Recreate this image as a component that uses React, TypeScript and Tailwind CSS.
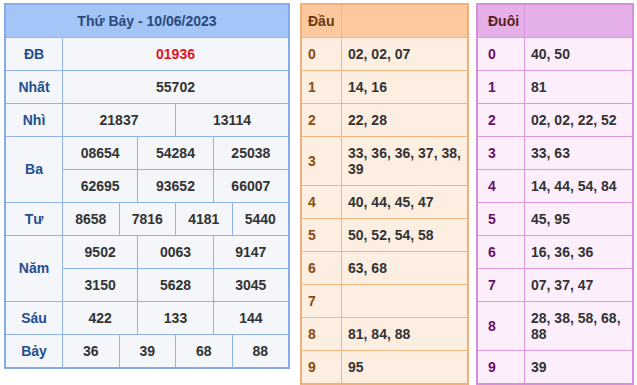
import React from 'react';

type Cell = { label: string; values: string[][] };

const prizes: Cell[] = [
  { label: 'ĐB', values: [['01936']] },
  { label: 'Nhất', values: [['55702']] },
  { label: 'Nhì', values: [['21837', '13114']] },
  { label: 'Ba', values: [['08654', '54284', '25038'], ['62695', '93652', '66007']] },
  { label: 'Tư', values: [['8658', '7816', '4181', '5440']] },
  { label: 'Năm', values: [['9502', '0063', '9147'], ['3150', '5628', '3045']] },
  { label: 'Sáu', values: [['422', '133', '144']] },
  { label: 'Bảy', values: [['36', '39', '68', '88']] },
];

const dau = ['02, 02, 07', '14, 16', '22, 28', '33, 36, 36, 37, 38, 39', '40, 44, 45, 47', '50, 52, 54, 58', '63, 68', '', '81, 84, 88', '95'];
const duoi = ['40, 50', '81', '02, 02, 22, 52', '33, 63', '14, 44, 54, 84', '45, 95', '16, 36, 36', '07, 37, 47', '28, 38, 58, 68, 88', '39'];

const ResultTable = () => (
  <div className="w-[286px] border-2 border-[#86ace8] bg-[#8fb3ea] flex flex-col gap-px">
    <div className="h-[32px] bg-[#a3c5f8] flex items-center justify-center text-[#2b4a78]">
      Thứ Bảy - 10/06/2023
    </div>
    {prizes.map((p, i) => (
      <div key={i} className="flex gap-px">
        <div className="w-[56px] shrink-0 bg-[#f4f6fa] flex items-center justify-center text-[#1f4f8f]">
          {p.label}
        </div>
        <div className="flex-1 flex flex-col gap-px">
          {p.values.map((row, r) => (
            <div key={r} className="h-[32px] flex gap-px">
              {row.map((v, k) => (
                <div
                  key={k}
                  className={`flex-1 bg-[#f4f6fa] flex items-center justify-center ${i === 0 ? 'text-[#e3141b]' : 'text-[#333333]'}`}
                >
                  {v}
                </div>
              ))}
            </div>
          ))}
        </div>
      </div>
    ))}
  </div>
);

interface LotoProps {
  title: string;
  rows: string[];
  width: string;
  labelW: string;
  tall: number;
  border: string;
  line: string;
  head: string;
  cell: string;
  labelColor: string;
  headColor: string;
  labelPad: string;
}

const LotoTable: React.FC<LotoProps> = ({ title, rows, width, labelW, tall, border, line, head, cell, labelColor, headColor, labelPad }) => (
  <div className={`${width} border-2 ${border} ${line} flex flex-col gap-px`}>
    <div className="h-[32px] flex gap-px">
      <div className={`${labelW} shrink-0 ${head} ${headColor} ${labelPad} flex items-center`}>{title}</div>
      <div className={`flex-1 ${head}`} />
    </div>
    {rows.map((v, i) => (
      <div key={i} className={`${i === tall ? 'h-[48px]' : 'h-[32px]'} flex gap-px`}>
        <div className={`${labelW} shrink-0 ${cell} ${labelColor} ${labelPad} flex items-center`}>{i}</div>
        <div className={`flex-1 ${cell} text-[#333333] pl-[6px] pr-[2px] flex items-center leading-[16px]`}>{v}</div>
      </div>
    ))}
  </div>
);

export default function App() {
  return (
    <div
      className="w-[637px] h-[385px] bg-white flex items-start pt-[3px] pl-[4px] text-[14px] font-bold"
      style={{ fontFamily: '"Liberation Sans", Arial, sans-serif' }}
    >
      <ResultTable />
      <div className="ml-[10px]">
        <LotoTable
          title="Đầu"
          rows={dau}
          width="w-[169px]"
          labelW="w-[39px]"
          tall={3}
          border="border-[#f0b07a]"
          line="bg-[#f2b680]"
          head="bg-[#fbc99d]"
          cell="bg-[#fdeee2]"
          labelColor="text-[#8a4b0e]"
          headColor="text-[#6b3a12]"
          labelPad="pl-[6px]"
        />
      </div>
      <div className="ml-[7px]">
        <LotoTable
          title="Đuôi"
          rows={duoi}
          width="w-[158px]"
          labelW="w-[46px]"
          tall={8}
          border="border-[#d68fd8]"
          line="bg-[#dc98dc]"
          head="bg-[#e5b0e7]"
          cell="bg-[#fdeefc]"
          labelColor="text-[#6b0f6d]"
          headColor="text-[#5a1f1f]"
          labelPad="pl-[10px]"
        />
      </div>
    </div>
  );
}
